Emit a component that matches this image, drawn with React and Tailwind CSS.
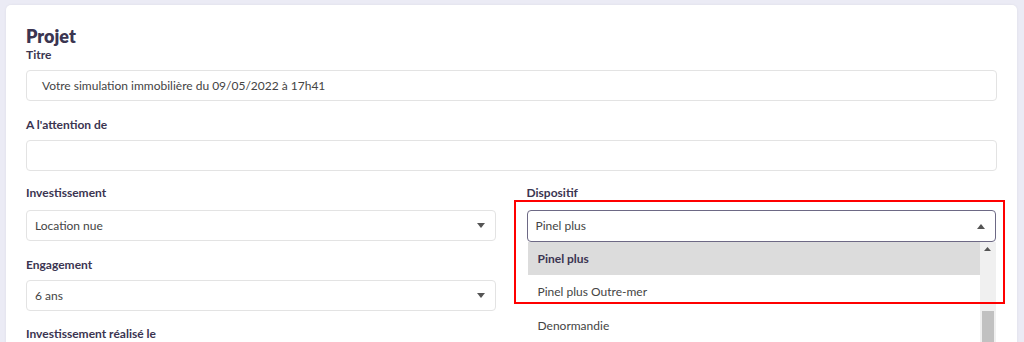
import React from "react";

const labelCls = "block text-[12px] leading-4 font-bold text-[#3b3551]";
const inputCls =
  "h-[31px] w-full rounded-[4px] border border-[#e3e3e3] bg-white flex items-center text-[12px] text-[#444]";

// small down / up triangles used in the selects
const Caret = ({ up }) => (
  <svg width="8" height="5" viewBox="0 0 8 5" className="shrink-0">
    <path d={up ? "M0 5 L4 0 L8 5 Z" : "M0 0 L8 0 L4 5 Z"} fill="#555" />
  </svg>
);

const SelectBox = ({ value }) => (
  <div className={`${inputCls} justify-between pl-2 pr-[10px]`}>
    <span>{value}</span>
    <Caret />
  </div>
);

export default function App() {
  return (
    <div
      className="h-[342px] w-[1024px] overflow-hidden bg-[#ebebf5] pl-[6px] pt-[5px]"
      style={{ fontFamily: "Lato, 'Noto Sans', sans-serif" }}
    >
      <div className="relative h-[400px] w-[1011px] rounded-[5px] bg-white pl-5 pr-5 pt-[20px] shadow-[0_0_3px_rgba(0,0,0,0.06)]">
        <h1 className="text-[18px] leading-[22px] font-extrabold text-[#3b3551]">Projet</h1>
        <label className={labelCls}>Titre</label>
        <div className={`${inputCls} mt-[7px] w-[970px] pl-[15px]`}>
          Votre simulation immobilière du 09/05/2022 à 17h41
        </div>

        <label className={`${labelCls} mt-4`}>A l'attention de</label>
        <div className={`${inputCls} mt-[7px] w-[970px]`}></div>

        <div className="mt-[14px] grid w-[970px] grid-cols-2 gap-[31px]">
          <div>
            <label className={labelCls}>Investissement</label>
            <div className="mt-[9px]">
              <SelectBox value="Location nue" />
            </div>
            <label className={`${labelCls} mt-4`}>Engagement</label>
            <div className="mt-[7px]">
              <SelectBox value="6 ans" />
            </div>
            <label className={`${labelCls} mt-[15px]`}>Investissement réalisé le</label>
          </div>

          <div className="relative">
            <label className={labelCls}>Dispositif</label>
            <div className="mt-[9px] flex h-[32px] w-full items-center justify-between rounded-[4px] border border-[#6d6985] bg-white pl-2 pr-[10px] text-[12px] text-[#444]">
              <span>Pinel plus</span>
              <Caret up />
            </div>

            {/* open dropdown list */}
            <div className="absolute left-[1px] top-[57px] z-10 flex w-[468px] bg-white">
              <div className="flex-1 text-[12px] text-[#444]">
                <div className="flex h-[33px] items-center bg-[#dcdcdc] pl-[10px] font-bold text-[#3b3551]">
                  Pinel plus
                </div>
                <div className="flex h-[34px] items-center pl-[10px]">Pinel plus Outre-mer</div>
                <div className="flex h-[34px] items-center pl-[10px]">Denormandie</div>
              </div>
              <div className="flex w-[16px] flex-col items-center bg-[#f0f0f0] pt-[5px]">
                <svg width="7" height="4" viewBox="0 0 7 4">
                  <path d="M0 4 L3.5 0 L7 4 Z" fill="#555" />
                </svg>
                <div className="mt-[60px] h-[40px] w-[12px] bg-[#c1c1c1]"></div>
              </div>
            </div>
          </div>
        </div>

        {/* red highlight annotation */}
        <div className="absolute left-[508px] top-[195px] z-20 h-[104px] w-[491px] border-2 border-[#ff0000]"></div>
      </div>
    </div>
  );
}
